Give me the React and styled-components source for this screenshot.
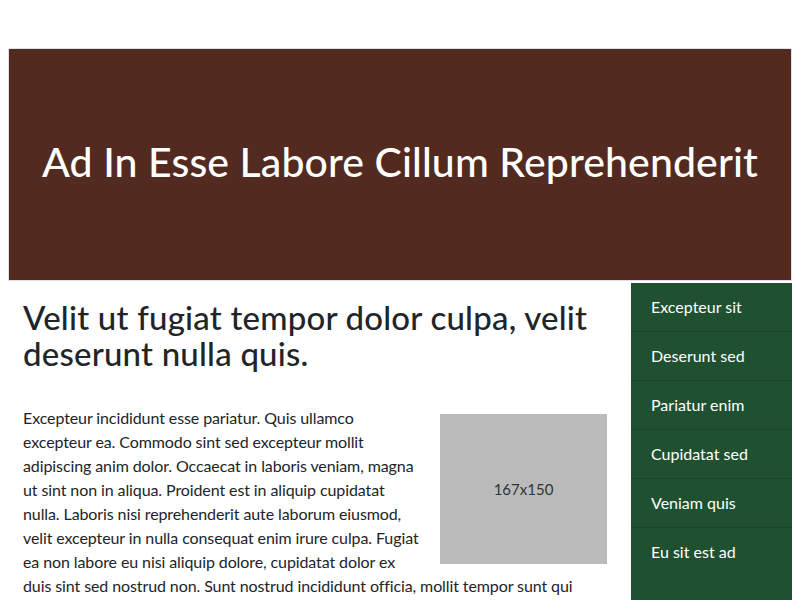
import styled, { createGlobalStyle } from 'styled-components';

const GlobalStyle = createGlobalStyle`
    body {
        margin: 8px;
        font-family: Lato, "Liberation Sans", sans-serif;
        color: #212529;
        background: #fff;
    }
`

const Page = styled.div`
    padding-top: 40px;
`

const Banner = styled.header`
    height: 231px;
    background-color: #522a1f;
    border: 1px solid #dee2e6;
    display: flex;
    align-items: center;
    justify-content: center;
`

const BannerTitle = styled.h1`
    margin: 0 0 6px;
    color: #fff;
    font-size: 41px;
    font-weight: 500;
    line-height: 1.2;
    letter-spacing: 0.1px;
`

const Body = styled.div`
    display: flex;
    align-items: flex-start;
    margin-top: 2px;
`

const Main = styled.main`
    flex: 1;
    padding: 16px 24px 0 15px;
`

const Heading = styled.h2`
    margin: 0 0 35px;
    font-size: 33px;
    font-weight: 500;
    line-height: 36px;
    letter-spacing: 0.2px;
`

const Text = styled.p`
    margin: 0;
    font-size: 16px;
    line-height: 24px;
    letter-spacing: -0.1px;
`

const Placeholder = styled.div`
    float: right;
    width: 167px;
    height: 150px;
    margin: 8px 0 8px 16px;
    background-color: #bbbbbb;
    color: #333;
    font-size: 15px;
    display: flex;
    align-items: center;
    justify-content: center;
`

const Sidebar = styled.nav`
    width: 161px;
    min-height: 320px;
    background-color: #1f5130;
`

const SideItem = styled.div`
    padding: 12px 20px;
    line-height: 24px;
    font-size: 16px;
    color: #fff;
    border-bottom: 1px solid ${props => props.last ? 'transparent' : '#1a4428'};
`

const links = ['Excepteur sit', 'Deserunt sed', 'Pariatur enim', 'Cupidatat sed', 'Veniam quis', 'Eu sit est ad']

const App = () => {
    return (
        <Page>
            <GlobalStyle />
            <Banner>
                <BannerTitle>Ad In Esse Labore Cillum Reprehenderit</BannerTitle>
            </Banner>
            <Body>
                <Main>
                    <Heading>Velit ut fugiat tempor dolor culpa, velit deserunt nulla quis.</Heading>
                    <Placeholder>167x150</Placeholder>
                    <Text>
                        Excepteur incididunt esse pariatur. Quis ullamco excepteur ea. Commodo sint sed excepteur mollit adipiscing anim dolor. Occaecat in laboris veniam, magna ut sint non in aliqua. Proident est in aliquip cupidatat nulla. Laboris nisi reprehenderit aute laborum eiusmod, velit excepteur in nulla consequat enim irure culpa. Fugiat ea non labore eu nisi aliquip dolore, cupidatat dolor ex duis sint sed nostrud non. Sunt nostrud incididunt officia, mollit tempor sunt qui
                    </Text>
                </Main>
                <Sidebar>
                    {links.map((l, i) => (
                        <SideItem key={l} last={i === links.length - 1}>{l}</SideItem>
                    ))}
                </Sidebar>
            </Body>
        </Page>
    )
}

export default App
